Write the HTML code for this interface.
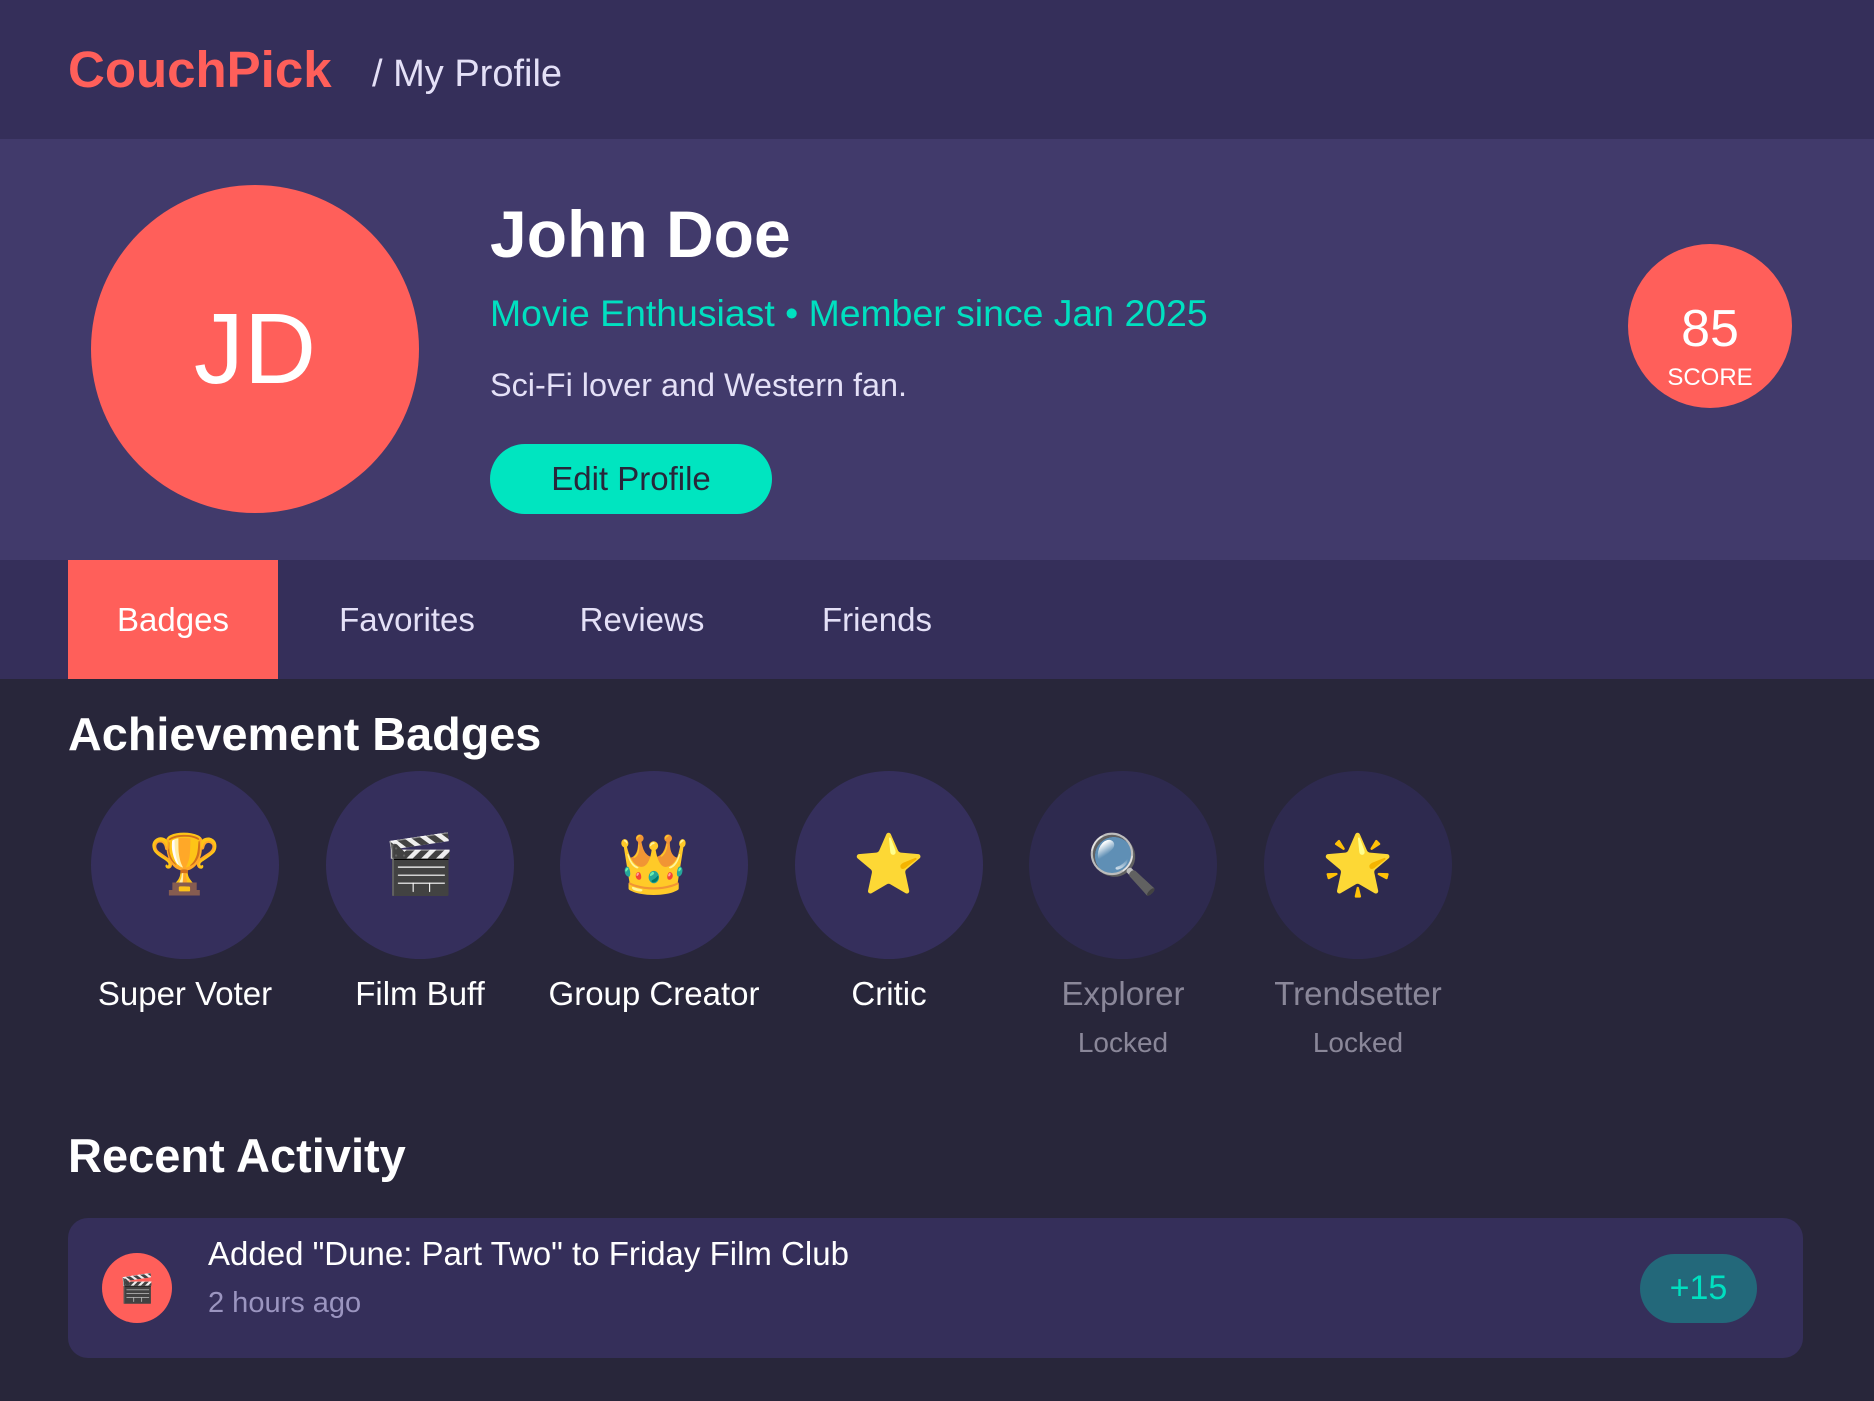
<!DOCTYPE html>
<html><head><meta charset="utf-8"><style>
*{margin:0;padding:0;box-sizing:border-box}
body{width:1874px;height:1401px;background:#28263a;font-family:"Liberation Sans",sans-serif;position:relative;overflow:hidden;color:#fff}
.a{position:absolute;white-space:nowrap}
.hdr{left:0;top:0;width:1874px;height:139px;background:#352f5a}
.hero{left:0;top:139px;width:1874px;height:421px;background:#413a6b}
.tabs{left:0;top:560px;width:1874px;height:119px;background:#352f5a}
.circ{border-radius:50%;display:flex;align-items:center;justify-content:center}
.tab{top:560px;height:119px;width:210px;display:flex;align-items:center;justify-content:center;font-size:33px;color:#e4e0f7}
.badge{top:771px;width:188px;height:188px;background:#352f5c;font-size:58px}
.lbl{top:975px;width:260px;text-align:center;font-size:33px}
.lk{top:1027px;width:260px;text-align:center;font-size:28px;color:#8a8799}
</style></head><body>
<div class="a hdr"></div>
<div class="a" style="left:68px;top:40px;font-size:51px;font-weight:bold;color:#ff5f5a">CouchPick</div>
<div class="a" style="left:372px;top:53px;font-size:38px;color:#e4e0f7">/ My Profile</div>
<div class="a hero"></div>
<div class="a circ" style="left:91px;top:185px;width:328px;height:328px;background:#ff5f5a;font-size:100px">JD</div>
<div class="a" style="left:490px;top:196px;font-size:66px;font-weight:bold">John Doe</div>
<div class="a" style="left:490px;top:292px;font-size:37.4px;color:#00e0c0">Movie Enthusiast • Member since Jan 2025</div>
<div class="a" style="left:490px;top:367px;font-size:32.4px;color:#e4e0f7">Sci-Fi lover and Western fan.</div>
<div class="a" style="left:490px;top:444px;width:282px;height:70px;border-radius:35px;background:#00e5c0;color:#28263a;font-size:33px;display:flex;align-items:center;justify-content:center">Edit Profile</div>
<div class="a circ" style="left:1628px;top:244px;width:164px;height:164px;background:#ff5f5a"></div>
<div class="a" style="left:1628px;top:299px;width:164px;text-align:center;font-size:52px">85</div>
<div class="a" style="left:1628px;top:364px;width:164px;text-align:center;font-size:24px">SCORE</div>
<div class="a tabs"></div>
<div class="a tab" style="left:68px;background:#ff5f5a;color:#fff">Badges</div>
<div class="a tab" style="left:302px">Favorites</div>
<div class="a tab" style="left:537px">Reviews</div>
<div class="a tab" style="left:772px">Friends</div>
<div class="a" style="left:68px;top:707px;font-size:46.8px;font-weight:bold">Achievement Badges</div>
<div class="a circ badge" style="left:91px">🏆</div>
<div class="a circ badge" style="left:326px">🎬</div>
<div class="a circ badge" style="left:560px">👑</div>
<div class="a circ badge" style="left:795px">⭐</div>
<div class="a circ badge" style="left:1029px;background:#2e2a4f">🔍</div>
<div class="a circ badge" style="left:1264px;background:#2e2a4f">🌟</div>
<div class="a lbl" style="left:55px">Super Voter</div>
<div class="a lbl" style="left:290px">Film Buff</div>
<div class="a lbl" style="left:524px">Group Creator</div>
<div class="a lbl" style="left:759px">Critic</div>
<div class="a lbl" style="left:993px;color:#8a8799">Explorer</div>
<div class="a lbl" style="left:1228px;color:#8a8799">Trendsetter</div>
<div class="a lk" style="left:993px">Locked</div>
<div class="a lk" style="left:1228px">Locked</div>
<div class="a" style="left:68px;top:1128px;font-size:47px;font-weight:bold">Recent Activity</div>
<div class="a" style="left:68px;top:1218px;width:1735px;height:140px;border-radius:20px;background:#352f5a"></div>
<div class="a circ" style="left:102px;top:1253px;width:70px;height:70px;background:#ff5f5a;font-size:28px">🎬</div>
<div class="a" style="left:208px;top:1235px;font-size:33px">Added "Dune: Part Two" to Friday Film Club</div>
<div class="a" style="left:208px;top:1287px;font-size:29px;color:#9b95c0">2 hours ago</div>
<div class="a circ" style="left:1640px;top:1254px;width:117px;height:69px;border-radius:35px;background:#23687a;color:#00e0c0;font-size:34px">+15</div>
</body></html>
